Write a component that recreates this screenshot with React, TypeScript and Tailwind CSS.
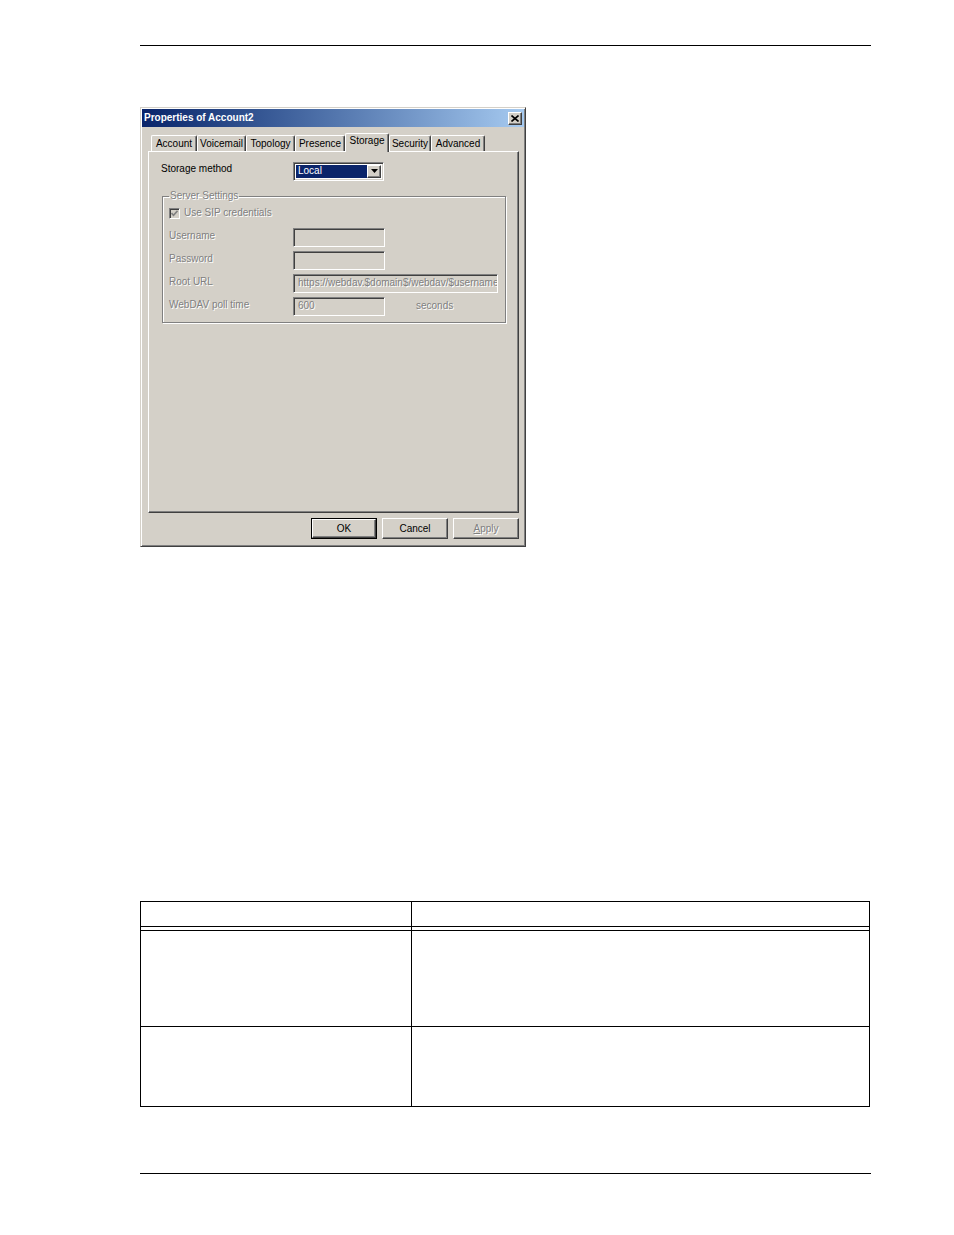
const raised =
  'border border-t-white border-l-white border-r-[#404040] border-b-[#404040] shadow-[inset_-1px_-1px_0_#808080]'
const sunken =
  'border border-t-[#808080] border-l-[#808080] border-r-white border-b-white shadow-[inset_1px_1px_0_#404040,inset_-1px_-1px_0_#d4d0c8]'
const dim = 'text-[#808080] [text-shadow:1px_1px_0_#ffffff]'

const tabs = [
  { label: 'Account', w: 'w-[46px]' },
  { label: 'Voicemail', w: 'w-[49px]' },
  { label: 'Topology', w: 'w-[49px]' },
  { label: 'Presence', w: 'w-[50px]' },
  { label: 'Storage', w: 'w-[44px]', active: true },
  { label: 'Security', w: 'w-[42px]' },
  { label: 'Advanced', w: 'w-[54px]' },
]

function Tab({ label, w, active }: { label: string; w: string; active?: boolean }) {
  if (active) {
    return (
      <div
        className={`${w} relative z-10 -mb-px flex h-[19px] items-start justify-center rounded-t-[2px] border-t border-l border-r border-t-white border-l-white border-r-[#404040] bg-[#d4d0c8] pt-[1px] shadow-[inset_-1px_0_0_#808080]`}
      >
        {label}
      </div>
    )
  }
  return (
    <div
      className={`${w} flex h-[16px] items-center justify-center rounded-t-[2px] border-t border-l border-r border-t-white border-l-white border-r-[#404040] shadow-[inset_-1px_0_0_#808080]`}
    >
      {label}
    </div>
  )
}

function Field({ w, value }: { w: string; value?: string }) {
  return (
    <div className={`${w} ${sunken} flex h-[19px] items-center overflow-hidden whitespace-nowrap pl-[4px] ${dim}`}>
      {value}
    </div>
  )
}

function Row({ label, children }: { label: string; children: React.ReactNode }) {
  return (
    <div className="flex h-[18px] items-center">
      <span className={`w-[124px] -mt-[3px] ${dim}`}>{label}</span>
      {children}
    </div>
  )
}

function Dialog() {
  return (
    <div className="flex h-[440px] w-[386px] flex-col border border-t-[#d4d0c8] border-l-[#d4d0c8] border-r-[#404040] border-b-[#404040] bg-[#d4d0c8] text-[10px] leading-[12px] text-black shadow-[inset_1px_1px_0_#ffffff,inset_-1px_-1px_0_#808080] font-['Liberation_Sans',Arial,sans-serif]">
      {/* title bar */}
      <div className="mx-[1px] mt-[1px] flex h-[18px] items-center justify-between bg-gradient-to-r from-[#0a246a] to-[#a6caf0] pl-[2px] pr-[2px]">
        <span className="font-bold text-white">Properties of Account2</span>
        <button className={`${raised} flex h-[13px] w-[14px] items-center justify-center bg-[#d4d0c8]`}>
          <svg width="8" height="7" viewBox="0 0 8 7">
            <path d="M0.5 0.5 L7.5 6.5 M7.5 0.5 L0.5 6.5" stroke="#000" strokeWidth="1.6" />
          </svg>
        </button>
      </div>

      <div className="flex flex-1 flex-col pl-[7px] pt-[6px]">
        {/* tabs */}
        <div className="ml-[3px] flex h-[18px] items-end">
          {tabs.map((t) => (
            <Tab key={t.label} {...t} />
          ))}
        </div>

        {/* tab page */}
        <div className="h-[362px] w-[371px] border border-t-white border-l-white border-r-[#404040] border-b-[#404040] px-[12px] pt-[10px] shadow-[inset_-1px_-1px_0_#808080]">
          <div className="flex h-[18px] items-center">
            <span className="-mt-[4px] w-[132px]">Storage method</span>
            <div className={`${sunken} flex h-[19px] w-[91px] items-center bg-white p-[2px]`}>
              <div className="flex h-full flex-1 items-center bg-[#0a246a] pl-[2px] text-white">Local</div>
              <div className={`${raised} flex h-full w-[14px] items-center justify-center bg-[#d4d0c8]`}>
                <svg width="7" height="4" viewBox="0 0 7 4">
                  <path d="M0 0 H7 L3.5 4 Z" fill="#000" />
                </svg>
              </div>
            </div>
          </div>

          <fieldset className="ml-[1px] mt-[10px] w-[344px] border border-[#808080] pb-[7px] pl-[6px] shadow-[inset_1px_1px_0_#ffffff,1px_1px_0_#ffffff]">
            <legend className={`ml-[0px] px-[1px] ${dim}`}>Server Settings</legend>
            <div className="mt-[5px] flex h-[12px] items-center gap-[4px]">
              <div className={`${sunken} flex h-[11px] w-[11px] items-center justify-center bg-[#d4d0c8]`}>
                <svg width="7" height="7" viewBox="0 0 7 7">
                  <path d="M0.5 3 L2.5 5.2 L6.5 0.8" stroke="#808080" strokeWidth="1.6" fill="none" />
                </svg>
              </div>
              <span className={dim}>Use SIP credentials</span>
            </div>
            <div className="mt-[9px] flex flex-col gap-[5px]">
              <Row label="Username">
                <Field w="w-[92px]" />
              </Row>
              <Row label="Password">
                <Field w="w-[92px]" />
              </Row>
              <Row label="Root URL">
                <Field w="w-[205px]" value="https://webdav.$domain$/webdav/$username" />
              </Row>
              <Row label="WebDAV poll time">
                <Field w="w-[92px]" value="600" />
                <span className={`ml-[31px] ${dim}`}>seconds</span>
              </Row>
            </div>
          </fieldset>
        </div>

        {/* buttons */}
        <div className="mt-[5px] flex w-[371px] justify-end gap-[5px]">
          <div className="h-[21px] w-[66px] border border-black">
            <button className={`${raised} flex h-full w-full items-center justify-center bg-[#d4d0c8]`}>OK</button>
          </div>
          <button className={`${raised} flex h-[21px] w-[66px] items-center justify-center bg-[#d4d0c8]`}>Cancel</button>
          <button className={`${raised} flex h-[21px] w-[66px] items-center justify-center bg-[#d4d0c8] ${dim}`}>
            <span>
              <span className="underline">A</span>pply
            </span>
          </button>
        </div>
      </div>
    </div>
  )
}

function PropsTable() {
  return (
    <div className="w-[730px] border border-black">
      <div className="flex h-[25px] border-b border-black">
        <div className="w-[271px] border-r border-black" />
        <div className="flex-1" />
      </div>
      <div className="flex h-[4px] border-b border-black">
        <div className="w-[271px] border-r border-black" />
      </div>
      <div className="flex h-[96px] border-b border-black">
        <div className="w-[271px] border-r border-black" />
        <div className="flex-1" />
      </div>
      <div className="flex h-[79px]">
        <div className="w-[271px] border-r border-black" />
        <div className="flex-1" />
      </div>
    </div>
  )
}

export default function App() {
  return (
    <div className="h-[1235px] w-[954px] bg-white pl-[140px] pt-[45px]">
      <div className="h-px w-[731px] bg-black" />
      <div className="mt-[61px]">
        <Dialog />
      </div>
      <div className="mt-[354px]">
        <PropsTable />
      </div>
      <div className="mt-[66px] h-px w-[731px] bg-black" />
    </div>
  )
}
